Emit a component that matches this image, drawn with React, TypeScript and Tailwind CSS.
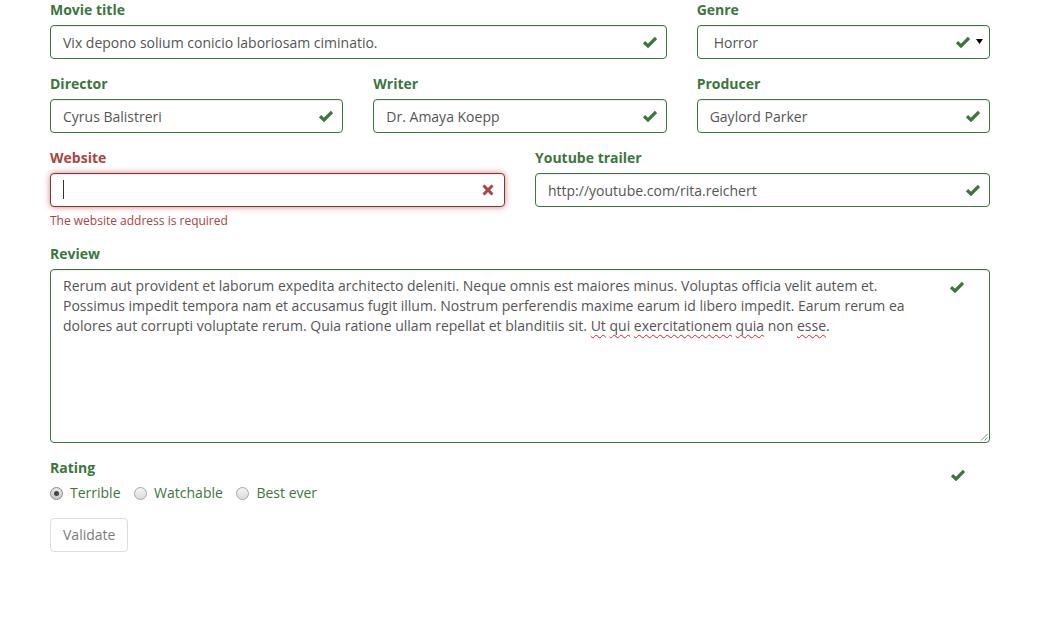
import React from "react";

const GREEN = "text-[#3c763d]";

function Check({ className = "" }: { className?: string }) {
  return (
    <svg width="14" height="12" viewBox="0 0 14 12" className={className}>
      <path d="M1 6.2 L5 10 L13 2" fill="none" stroke="currentColor" strokeWidth="3.2" />
    </svg>
  );
}

function Cross() {
  return (
    <svg width="12" height="12" viewBox="0 0 12 12" className="text-[#a94442]">
      <path d="M1.5 1.5 L10.5 10.5 M10.5 1.5 L1.5 10.5" fill="none" stroke="currentColor" strokeWidth="3" />
    </svg>
  );
}

function Label({ children, error = false }: { children: React.ReactNode; error?: boolean }) {
  return (
    <div className={`mb-[5px] h-5 font-bold ${error ? "text-[#a94442]" : GREEN}`}>{children}</div>
  );
}

function TextField({ label, value, className = "" }: { label: string; value: string; className?: string }) {
  return (
    <div className={`mb-[15px] ${className}`}>
      <Label>{label}</Label>
      <div className="relative h-[34px]">
        <input
          readOnly
          value={value}
          className="h-[34px] w-full rounded-[4px] border border-[#3c763d] bg-white pl-3 pr-[42px] text-[14px] text-[#555] shadow-[inset_0_1px_1px_rgba(0,0,0,0.075)] outline-none"
        />
        <span className="absolute right-0 top-0 flex h-[34px] w-[34px] items-center justify-center text-[#3c763d]">
          <Check />
        </span>
      </div>
    </div>
  );
}

function Squiggle({ children }: { children: React.ReactNode }) {
  return (
    <span className="underline decoration-wavy decoration-[#e02020] decoration-1 underline-offset-[3px]">
      {children}
    </span>
  );
}

function Radio({ label, checked = false }: { label: string; checked?: boolean }) {
  return (
    <label className="flex h-5 items-center text-[#3c763d]">
      <span
        className={`mr-[7px] flex h-[13px] w-[13px] items-center justify-center rounded-full border ${
          checked ? "border-[#8a8a8a] bg-gradient-to-b from-[#e8e8e8] to-[#c8c8c8]" : "border-[#a6a6a6] bg-gradient-to-b from-[#f4f4f4] to-[#dcdcdc]"
        }`}
      >
        {checked && <span className="h-[5px] w-[5px] rounded-full bg-[#444]" />}
      </span>
      {label}
    </label>
  );
}

export default function App() {
  return (
    <div className="min-h-[642px] w-[1040px] bg-white font-['Open_Sans',sans-serif] text-[14px] leading-5 text-[#333]">
      <div className="px-[50px]">
        <div className="grid grid-cols-12 gap-x-[30px]">
          <TextField className="col-span-8" label="Movie title" value="Vix depono solium conicio laboriosam ciminatio." />
          <div className="col-span-4 mb-[15px]">
            <Label>Genre</Label>
            <div className="relative flex h-[34px] items-center rounded-[4px] border border-[#3c763d] bg-white pl-4 pt-[2px] text-[#555] shadow-[inset_0_1px_1px_rgba(0,0,0,0.075)]">
              Horror
              <span className="absolute right-[9px] top-[-1px] flex h-[34px] w-[34px] items-center justify-center text-[#3c763d]">
                <Check />
              </span>
              <svg width="7" height="5" viewBox="0 0 7 5" className="absolute right-[6px] top-[13px]">
                <path d="M0 0 L7 0 L3.5 5 Z" fill="#000" />
              </svg>
            </div>
          </div>

          <TextField className="col-span-4" label="Director" value="Cyrus Balistreri" />
          <TextField className="col-span-4" label="Writer" value="Dr. Amaya Koepp" />
          <TextField className="col-span-4" label="Producer" value="Gaylord Parker" />

          <div className="col-span-6 mb-[15px]">
            <Label error>Website</Label>
            <div className="relative h-[34px]">
              <input
                readOnly
                value=""
                className="h-[34px] w-full rounded-[4px] border border-[#843534] bg-white pl-3 pr-[42px] text-[#555] shadow-[inset_0_1px_1px_rgba(0,0,0,0.075),0_0_6px_#ce8483] outline-none"
              />
              <span className="absolute left-[13px] top-[7px] h-[19px] w-px bg-[#333]" />
              <span className="absolute right-0 top-0 flex h-[34px] w-[34px] items-center justify-center">
                <Cross />
              </span>
            </div>
            <div className="mt-[5px] text-[12px] leading-[17px] text-[#a94442]">The website address is required</div>
          </div>
          <TextField className="col-span-6" label="Youtube trailer" value="http://youtube.com/rita.reichert" />

          <div className="col-span-12 mb-[15px]">
            <Label>Review</Label>
            <div className="relative h-[174px] rounded-[4px] border border-[#3c763d] bg-white py-[6px] pl-3 pr-[42.5px] text-[#555] shadow-[inset_0_1px_1px_rgba(0,0,0,0.075)]">
              Rerum aut provident et laborum expedita architecto deleniti. Neque omnis est maiores minus. Voluptas officia velit autem et.
              <br />
              Possimus impedit tempora nam et accusamus fugit illum. Nostrum perferendis maxime earum id libero impedit. Earum rerum ea
              <br />
              dolores aut corrupti voluptate rerum. Quia ratione ullam repellat et blanditiis sit. <Squiggle>Ut</Squiggle>{" "}
              <Squiggle>qui</Squiggle> <Squiggle>exercitationem</Squiggle> <Squiggle>quia</Squiggle> non{" "}
              <Squiggle>esse</Squiggle>.
              <span className="absolute right-[15px] top-0 flex h-[34px] w-[34px] items-center justify-center text-[#3c763d]">
                <Check />
              </span>
              <svg width="8" height="8" viewBox="0 0 8 8" className="absolute bottom-[1px] right-[1px]">
                <path d="M1 7.5 L7.5 1 M4.5 7.5 L7.5 4.5" stroke="#888" strokeWidth="1" />
              </svg>
            </div>
          </div>

          <div className="relative col-span-12 mb-[15px]">
            <Label>Rating</Label>
            <div className="mt-[1px] flex h-5 items-center gap-[13.6px]">
              <Radio label="Terrible" checked />
              <Radio label="Watchable" />
              <Radio label="Best ever" />
            </div>
            <span className="absolute right-[15px] top-0 flex h-[34px] w-[34px] items-center justify-center text-[#3c763d]">
              <Check />
            </span>
          </div>

          <div className="col-span-12">
            <button className="h-[34px] rounded-[4px] border border-[#ccc] bg-white px-3 text-[#333] opacity-65">
              Validate
            </button>
          </div>
        </div>
      </div>
    </div>
  );
}
